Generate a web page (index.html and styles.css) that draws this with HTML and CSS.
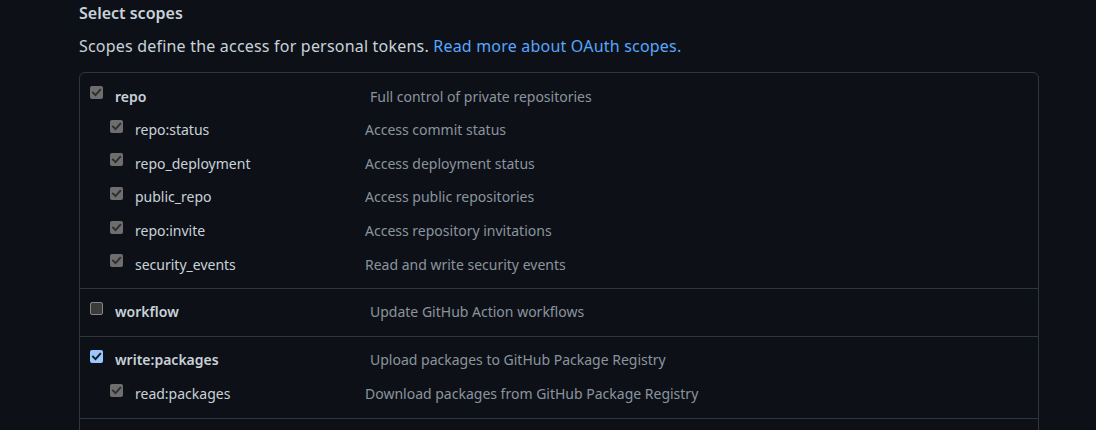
FILE: index.html
```html
<!DOCTYPE html>
<html lang="en">
<head>
<meta charset="utf-8">
<title>Select scopes</title>
<link rel="stylesheet" href="styles.css">
</head>
<body>
<main class="page">
  <h3 class="title">Select scopes</h3>
  <p class="note">Scopes define the access for personal tokens. <a class="link" href="#">Read more about OAuth scopes.</a></p>
  <div class="scopes">
    <div class="group">
      <div class="row main">
        <span class="cb cb-dis"><svg viewBox="0 0 13 13"><path d="M3 6.6 L5.5 9.1 L10.2 3.8"/></svg></span>
        <span class="name">repo</span>
        <span class="desc">Full control of private repositories</span>
      </div>
      <div class="row sub">
        <span class="cb cb-dis"><svg viewBox="0 0 13 13"><path d="M3 6.6 L5.5 9.1 L10.2 3.8"/></svg></span>
        <span class="name">repo:status</span>
        <span class="desc">Access commit status</span>
      </div>
      <div class="row sub">
        <span class="cb cb-dis"><svg viewBox="0 0 13 13"><path d="M3 6.6 L5.5 9.1 L10.2 3.8"/></svg></span>
        <span class="name">repo_deployment</span>
        <span class="desc">Access deployment status</span>
      </div>
      <div class="row sub">
        <span class="cb cb-dis"><svg viewBox="0 0 13 13"><path d="M3 6.6 L5.5 9.1 L10.2 3.8"/></svg></span>
        <span class="name">public_repo</span>
        <span class="desc">Access public repositories</span>
      </div>
      <div class="row sub">
        <span class="cb cb-dis"><svg viewBox="0 0 13 13"><path d="M3 6.6 L5.5 9.1 L10.2 3.8"/></svg></span>
        <span class="name">repo:invite</span>
        <span class="desc">Access repository invitations</span>
      </div>
      <div class="row sub">
        <span class="cb cb-dis"><svg viewBox="0 0 13 13"><path d="M3 6.6 L5.5 9.1 L10.2 3.8"/></svg></span>
        <span class="name">security_events</span>
        <span class="desc">Read and write security events</span>
      </div>
    </div>
    <div class="group">
      <div class="row main">
        <span class="cb cb-off"></span>
        <span class="name">workflow</span>
        <span class="desc">Update GitHub Action workflows</span>
      </div>
    </div>
    <div class="group">
      <div class="row main">
        <span class="cb cb-on"><svg viewBox="0 0 13 13"><path d="M3 6.6 L5.5 9.1 L10.2 3.8"/></svg></span>
        <span class="name">write:packages</span>
        <span class="desc">Upload packages to GitHub Package Registry</span>
      </div>
      <div class="row sub">
        <span class="cb cb-dis"><svg viewBox="0 0 13 13"><path d="M3 6.6 L5.5 9.1 L10.2 3.8"/></svg></span>
        <span class="name">read:packages</span>
        <span class="desc">Download packages from GitHub Package Registry</span>
      </div>
    </div>
    <div class="group group-empty"></div>
  </div>
</main>
</body>
</html>
```
FILE: styles.css
```css
html, body {
  margin: 0;
  padding: 0;
  background: #0d1117;
  height: 100%;
  overflow: hidden;
}
body {
  font-family: "Noto Sans", "Open Sans", sans-serif;
  color: #c9d1d9;
}
.page {
  padding: 1px 0 0 79px;
  width: 960px;
}
.title {
  margin: 0;
  font-size: 16px;
  line-height: 24px;
  font-weight: 600;
  color: #c9d1d9;
}
.note {
  margin: 9px 0 0;
  font-size: 16px;
  line-height: 24px;
  letter-spacing: 0.2px;
  color: #c9d1d9;
}
.link {
  color: #58a6ff;
  text-decoration: none;
}
.scopes {
  margin-top: 14px;
  border: 1px solid #30363d;
  border-radius: 6px;
}
.group {
  padding: 6px 0 7px 10px;
  border-top: 1px solid #30363d;
}
.group:first-child {
  border-top: 0;
}
.group-empty {
  height: 40px;
}
.row {
  display: flex;
  align-items: center;
  font-size: 14px;
}
.row.main {
  height: 34px;
}
.row.sub {
  height: 33.6px;
  padding-left: 20px;
}
.cb {
  width: 13px;
  height: 13px;
  box-sizing: border-box;
  border-radius: 2px;
  margin: 0 12px 7px 0;
  flex: none;
  display: block;
}
.cb svg {
  display: block;
  width: 13px;
  height: 13px;
  fill: none;
  stroke-width: 2;
  stroke-linecap: square;
}
.cb-dis {
  background: #6e6e6e;
}
.cb-dis svg { stroke: #2e2e2e; }
.cb-on {
  background: #99c8ff;
}
.cb-on svg { stroke: #1a1a1a; }
.cb-off {
  background: #3b3b3b;
  border: 1px solid #858585;
}
.name {
  flex: none;
  color: #c9d1d9;
}
.main .name {
  width: 255px;
  font-weight: 600;
}
.sub .name {
  width: 230px;
}
.desc {
  color: #8b949e;
}
```
